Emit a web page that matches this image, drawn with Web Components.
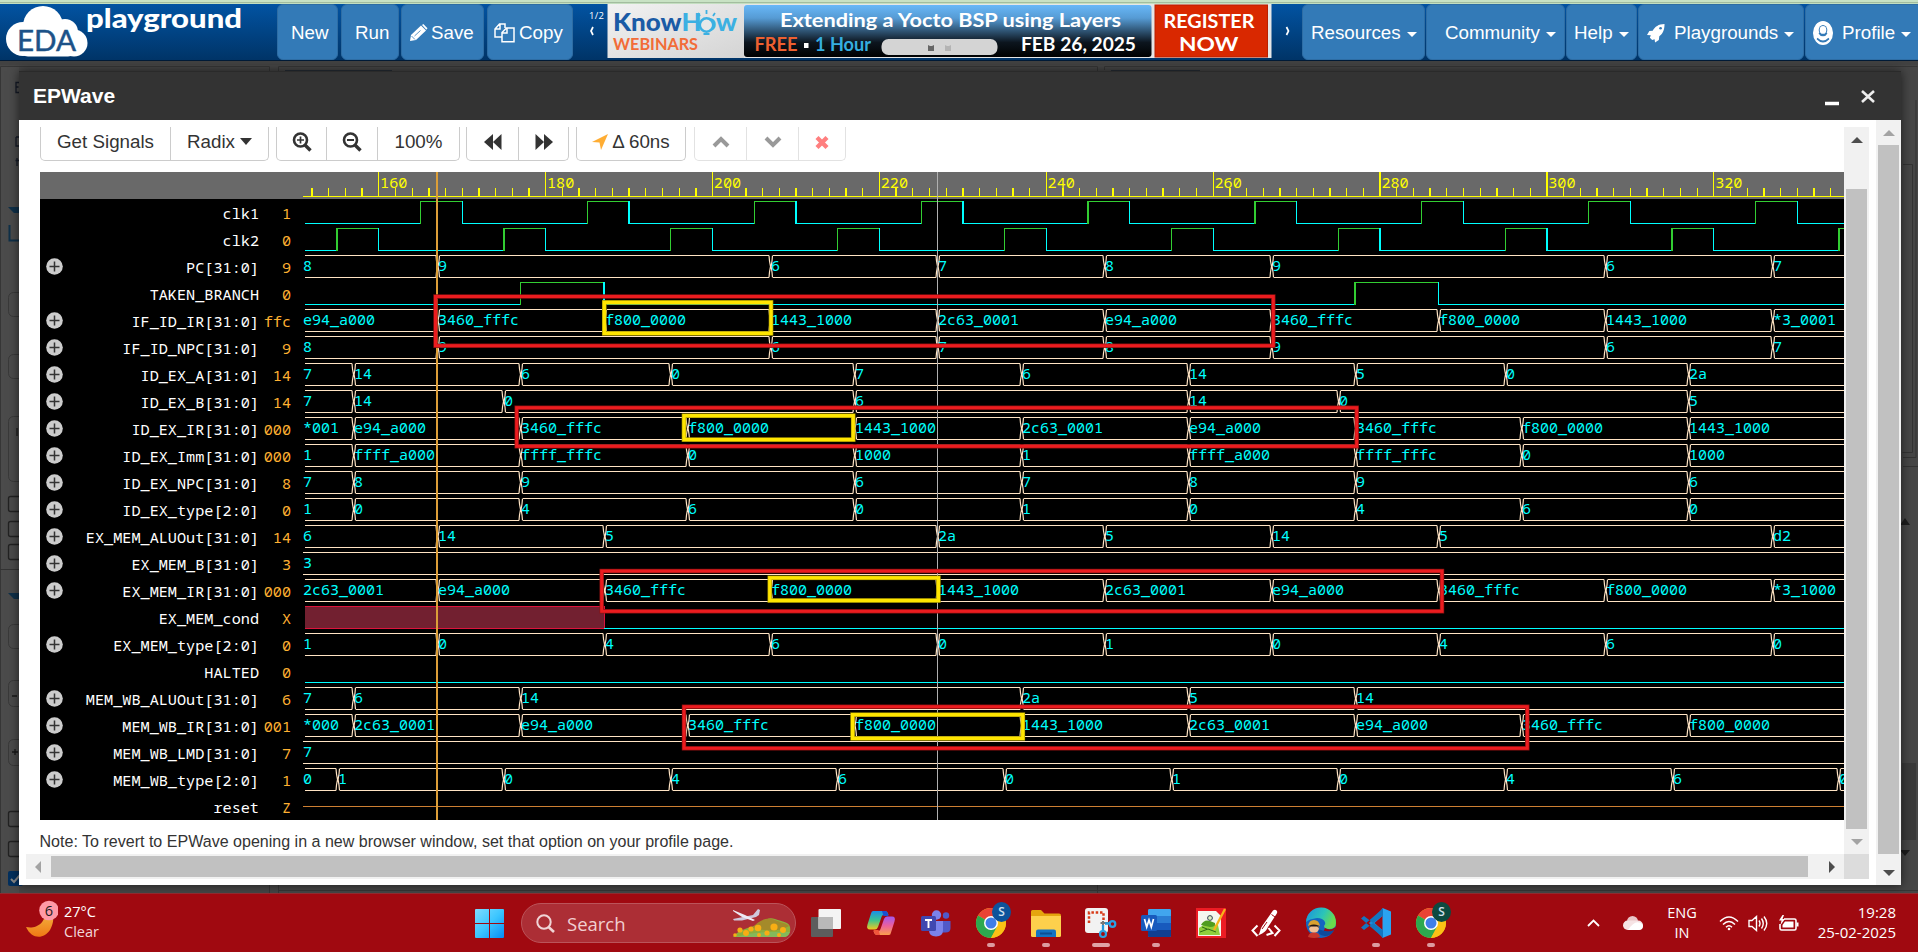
<!DOCTYPE html>
<html lang="en">
<head>
<meta charset="utf-8">
<title>EDA Playground - EPWave</title>
<style>
html,body{margin:0;padding:0;height:100%;overflow:hidden}
body{font-family:"Liberation Sans",Arial,sans-serif;font-size:18.75px;background:#484848}
</style>
</head>
<body>
<eda-app></eda-app>
<script>
function define(name, css, html, init) {
  const tpl = document.createElement('template');
  tpl.innerHTML = '<style>*{box-sizing:border-box}' + css + '</style>' + html;
  customElements.define(name, class extends HTMLElement {
    constructor() {
      super();
      this.attachShadow({ mode: 'open' }).appendChild(tpl.content.cloneNode(true));
    }
    connectedCallback() { if (init && !this.ready) { this.ready = true; init.call(this, this.shadowRoot); } }
  });
}

/* ---------- top navigation ---------- */
define('nav-button', `
:host{display:flex;align-items:center;box-sizing:border-box;height:56px;background:#337ab7;border:1px solid #2e6da4;border-radius:6px;color:#fff;white-space:nowrap;padding-top:1px}
::slotted(svg){flex:none}
i{display:none;width:0;height:0;border:5px solid transparent;border-top-color:#fff;border-bottom:0;margin:3px 0 0 6px}
:host([menu]) i{display:block}`, `<slot></slot><i></i>`);

define('site-logo', `:host{display:block;width:277px;height:56px}svg{display:block;overflow:visible}`, `
<svg width="277" height="56" viewBox="0 4 277 56">
<g fill="#fff"><circle cx="43" cy="26" r="20"/><circle cx="23" cy="39" r="17"/><circle cx="65" cy="32" r="13"/><circle cx="74" cy="43" r="13.5"/><rect x="20" y="34" width="56" height="22.5" rx="8"/></g>
<text x="17" y="50.7" font-family="Lato,sans-serif" font-size="29" fill="#1c5288" stroke="#1c5288" stroke-width=".5" textLength="59" lengthAdjust="spacingAndGlyphs">EDA</text>
<text x="86" y="28" font-family="Lato,sans-serif" font-weight="900" font-size="27" fill="#fff" textLength="156" lengthAdjust="spacingAndGlyphs">playground</text>
</svg>`);

define('webinar-banner', `:host{display:block;width:720px;height:56px}svg{display:block}text{font-family:Lato,sans-serif;font-weight:700}`, `
<svg width="720" height="56" viewBox="580 4 720 56">
<defs><linearGradient id="b" x1="0" y1="0" x2="0" y2="1"><stop offset="0" stop-color="#68b8f8"/><stop offset=".25" stop-color="#569bd4"/><stop offset=".72" stop-color="#0c151e"/><stop offset="1" stop-color="#000"/></linearGradient>
<linearGradient id="g" x1="0" y1="0" x2="1" y2="1"><stop offset="0" stop-color="#f2f2f2"/><stop offset="1" stop-color="#d4d4d4"/></linearGradient></defs>
<text x="589" y="18.5" fill="#fff" style="font:9.5px 'Open Sans',sans-serif" textLength="15">1 / 2</text>
<path d="M593 27l-2 4 2 4" fill="none" stroke="#fff" stroke-width="1.7"/>
<path d="M1286.500 27l2 4-2 4" fill="none" stroke="#fff" stroke-width="1.700"/>
<rect x="607.500" y="4" width="664" height="54" fill="#e6e6e6"/><rect x="608" y="4" width="136" height="54" fill="url(#g)"/>
<text x="613" y="31" font-size="24" style="font-weight:900" fill="#1a5ba6" textLength="124" lengthAdjust="spacingAndGlyphs">Know<tspan fill="#3cb0e2">How</tspan></text>
<circle cx="706.500" cy="25" r="6.700" fill="#e8e8e8" stroke="#3cb0e2" stroke-width="2.500"/>
<path d="M703.500 34h6M706.500 10v4M698 13l2 3M715 13l-2 3" stroke="#3cb0e2" stroke-width="1.800"/>
<text x="613" y="50" font-size="17.500" fill="#f26c38" textLength="85" lengthAdjust="spacingAndGlyphs">WEBINARS</text>
<rect x="744" y="5" width="407.500" height="52" rx="3" fill="url(#b)"/>
<text x="780" y="26.700" font-size="19.500" fill="#fff" textLength="341" lengthAdjust="spacingAndGlyphs">Extending a Yocto BSP using Layers</text>
<text x="754.500" y="51" font-size="18.500" fill="#ee6030" textLength="43" lengthAdjust="spacingAndGlyphs">FREE</text>
<rect x="804" y="43" width="4.500" height="5" fill="#fff"/>
<text x="815" y="51" font-size="18.500" fill="#35aee0" textLength="56" lengthAdjust="spacingAndGlyphs">1 Hour</text>
<rect x="881.500" y="39" width="116" height="16" rx="7" fill="#d4d4d4"/>
<path d="M928 45l2 1h2l2-1v6h-6z" fill="#666"/><path d="M945 45l2 1h2l2-1v6h-6z" fill="#b4b4b4"/>
<text x="1021" y="51" font-size="18.500" fill="#fff" textLength="115" lengthAdjust="spacingAndGlyphs">FEB 26, 2025</text>
<rect x="1155" y="5" width="112.500" height="52" fill="#d92800" stroke="#b81f00"/>
<text x="1163.500" y="28" font-size="18.500" fill="#fff" textLength="91" lengthAdjust="spacingAndGlyphs">REGISTER</text>
<text x="1179" y="51" font-size="19.500" fill="#fff" textLength="59.500" lengthAdjust="spacingAndGlyphs">NOW</text>
</svg>`);

define('nav-bar', `
:host{display:block;flex:none}
.strip{height:4px;background:linear-gradient(#c8e2c4 0 2px,#a3bd9f 2px 3px,#c3dfc0 3px)}
.bar{height:57px;display:flex;background:linear-gradient(#0253a2,#003467);border-bottom:1px solid #001a36}
site-logo,webinar-banner,nav-button{flex:none}`, `
<div class="strip"></div>
<div class="bar">
<site-logo></site-logo>
<nav-button style="width:61px;padding-left:13px">New</nav-button>
<nav-button style="width:58px;margin-left:3px;padding-left:13px">Run</nav-button>
<nav-button style="width:83px;margin-left:2px;padding-left:7px"><svg width="19" height="18" viewBox="0 0 19 18" style="margin-right:3px"><path d="M1 17l1-6L12 1.500l5 5L7 16z" fill="#fff"/><path d="M13 1l1.300-1 4.200 4.200-1.200 1.600z" fill="#fff"/><path d="M2.500 12l3.500 3.500M5.500 12l6-5.500" stroke="#337ab7" stroke-width=".8"/></svg>Save</nav-button>
<nav-button style="width:86px;margin-left:3px;padding-left:6px"><svg width="21" height="20" viewBox="0 0 21 20" style="margin-right:4px" fill="none" stroke="#fff" stroke-width="1.500"><path d="M8 14H1V6l4.500-5H11v4M1 6h5V1M8 18.800V9.500L12.500 5H20v13.800zM8 10h5V5"/></svg>Copy</nav-button>
<webinar-banner style="margin-left:7px"></webinar-banner>
<nav-button menu style="width:123px;margin-left:2px;padding-left:8px">Resources</nav-button>
<nav-button menu style="width:139px;margin-left:1px;padding-left:18px">Community</nav-button>
<nav-button menu style="width:71px;margin-left:1px;padding-left:7px">Help</nav-button>
<nav-button menu style="width:166px;margin-left:1px;padding-left:8px"><svg width="18" height="20" viewBox="0 0 19 20" style="margin-right:9px"><path d="M18.500.500C12 .500 8.500 3.500 6 7.500L2.500 8 0 12l4 .300L3 15l2.500 2.500 2.500-1 .500 3.500 4-2.500.500-4C16.500 11 18.500 7 18.500.500z" fill="#fff"/><circle cx="14.300" cy="5" r="1.400" fill="#337ab7"/></svg>Playgrounds</nav-button>
<nav-button menu style="width:120px;margin-left:1px;padding-left:7px"><svg width="20" height="24" viewBox="0 0 20 20" preserveAspectRatio="none" style="margin-right:9px"><circle cx="10" cy="10" r="9.300" fill="#fff"/><circle cx="10" cy="7.600" r="4.300" fill="#337ab7"/><circle cx="10" cy="7.400" r="3.300" fill="#fff"/><path d="M6.200 10q1.300 2 3.800 2t3.800-2M4 14.500q6 5 12 0" fill="none" stroke="#337ab7" stroke-width="1.600"/><circle cx="10" cy="10" r="9.300" fill="none" stroke="#fff" stroke-width="1.400"/></svg>Profile</nav-button>
</div>`);

/* ---------- dimmed page behind the window ---------- */
define('page-backdrop', `:host{display:block;position:absolute;inset:0;z-index:0}svg{display:block}`,
`<svg width="1918" height="832" viewBox="0 61 1918 832"></svg>`, function (root) {
  let s = '<rect y="61" width="1918" height="832" fill="#464646"/><rect y="61" width="1918" height="4" fill="#424242"/>';
  s += '<path d="M.500 893V66.500H269.500V893M278.500 893V66.500H1097.500V893M1104.500 70V66.500H1917.500M278 890.500H1918" fill="none" stroke="#363636"/>';
  s += '<rect x="1" y="67" width="18" height="826" fill="#4b4b4b"/><path d="M0 569.500h19M1903 164.500h9.500v288h-10M1903 457.500h13V100M1903 466.500h15" fill="none" stroke="#333"/>';
  s += '<path d="M285 71.500h107M1111 71.500h89" stroke="#081826" stroke-width="2"/><rect x="1902" y="763" width="14" height="77" fill="#3a3a3a"/>';
  s += '<path d="M1900 525l5-7 5 7zM1900 850l5 6 5-6z" fill="#1c1c1c"/>';
  s += '<path d="M8 207h12v6h-6zM8 593h12v6h-6z" fill="#0f3049"/><path d="M9.500 225v15.500h12" fill="none" stroke="#0f3049" stroke-width="2"/>';
  for (const [y, h] of [[292, 24], [354, 24], [416, 65], [624, 24], [680, 26], [739, 26]]) s += `<rect x="8.500" y="${y + .5}" width="30" height="${h}" rx="5" fill="#4b4b4b" stroke="#393939"/>`;
  for (const y of [496, 521, 544, 811, 841]) s += `<rect x="8.500" y="${y + .5}" width="15" height="15" rx="2" fill="none" stroke="#222" stroke-width="1.300"/>`;
  s += '<rect x="8" y="871" width="15" height="15" rx="2" fill="#03305e"/><path d="M11 879l3 3 6-7" fill="none" stroke="#888" stroke-width="2"/>';
  s += '<path d="M19 82.500h-3v10h3M15.500 87h3M16 137v9h3M16 137h3M17 158v8M15.500 160.500h3.500" fill="none" stroke="#141a26" stroke-width="1.300"/><path d="M12 696h5M12 752h6M15 749v6M17 428v8" stroke="#1a1a1a" stroke-width="1.300"/>';
  root.querySelector('svg').innerHTML = s;
});

/* ---------- toolbar ---------- */
define('tool-group', `
:host{display:flex;flex:none;box-sizing:border-box;height:34px;border:1px solid #ccc;border-top:0;border-bottom-width:1.500px;border-radius:0 0 5px 5px;color:#333}
:host([off]){border-color:#e2e2e2}`, `<slot></slot>`);
define('tool-button', `
:host{display:flex;flex:none;box-sizing:border-box;align-items:center;justify-content:center;white-space:pre;border-left:1px solid #ccc;height:33px;padding-bottom:3px}
:host(:first-child){border-left:0}
:host([off]){border-color:#e2e2e2}
::slotted(svg){flex:none}`, `<slot></slot>`);

define('wave-toolbar', `:host{display:flex;height:34px;padding-left:14px}`, `
<tool-group><tool-button style="width:129px">Get Signals</tool-button><tool-button style="width:98px">Radix<svg width="12" height="7" style="margin:0 0 1px 5px"><path d="M0 0h12l-6 7z" fill="#333"/></svg></tool-button></tool-group>
<tool-group style="margin-left:7px"><tool-button style="width:49px"><svg width="20" height="20" viewBox="0 0 20 20" fill="none" stroke="#333"><circle cx="8.500" cy="8" r="6.500" stroke-width="2.600"/><path d="M13 13l5.500 5.500" stroke-width="3.400"/><path d="M5 8h7M8.500 4.500v7" stroke-width="1.700"/></svg></tool-button><tool-button style="width:51px"><svg width="20" height="20" viewBox="0 0 20 20" fill="none" stroke="#333"><circle cx="8.500" cy="8" r="6.500" stroke-width="2.600"/><path d="M13 13l5.500 5.500" stroke-width="3.400"/><path d="M5 8h7" stroke-width="2"/></svg></tool-button><tool-button style="width:82px">100%</tool-button></tool-group>
<tool-group style="margin-left:6px"><tool-button style="width:51px"><svg width="18" height="16" viewBox="0 0 18 16"><path d="M9 0v16L0 8zM17.500 0v16L9 8z" fill="#333"/></svg></tool-button><tool-button style="width:50px"><svg width="18" height="16" viewBox="0 0 18 16"><path d="M.500 0v16L9 8zM9 0v16L18 8z" fill="#333"/></svg></tool-button></tool-group>
<tool-group style="margin-left:7px"><tool-button style="width:108px"><svg width="16" height="16" viewBox="0 0 16 16" style="margin-right:4px"><path d="M16 0L9 16 7.500 8.500 0 8z" fill="#ffad33"/></svg>Δ 60ns</tool-button></tool-group>
<tool-group off style="margin-left:8px"><tool-button off style="width:51px"><svg width="18" height="12" viewBox="0 0 18 12"><path d="M2 10l7-7 7 7" fill="none" stroke="#999" stroke-width="4"/></svg></tool-button><tool-button off style="width:52px"><svg width="18" height="12" viewBox="0 0 18 12"><path d="M2 2l7 7 7-7" fill="none" stroke="#999" stroke-width="4"/></svg></tool-button><tool-button off style="width:47px"><svg width="14" height="13" viewBox="0 0 14 13"><path d="M2 1.500l10 10M12 1.500l-10 10" stroke="#ff7f7f" stroke-width="4.300"/></svg></tool-button></tool-group>`);

/* ---------- waveforms ---------- */
const W = 1541;
const X = t => 75.8 + 8.344 * (t - 160);
const MONO = '"Noto Sans Mono","Droid Sans Mono","DejaVu Sans Mono",monospace';

define('time-ruler', `:host{display:flex;justify-content:flex-end;height:27px;background:#696969}svg{display:block}text{font:15.2px ${MONO};fill:#ff0}`,
`<svg width="${W}" height="27"></svg>`, function (root) {
  let s = `<path d="M0 24.500H${W}" stroke="#ff0" shape-rendering="crispEdges"/>`;
  for (let t = 152; t <= 336; t += 2) {
    const x = X(t), major = t % 20 === 0;
    if (x > W) break;
    s += `<path d="M${x} ${major ? 0 : 16}V24" stroke="#ff0" stroke-width="1.300" shape-rendering="crispEdges"/>`;
    if (major) s += `<text x="${x + 1.3}" y="16">${t}</text>`;
  }
  root.querySelector('svg').innerHTML = s;
});

define('wave-row', `
:host{display:flex;height:27px;color:#fff;font:15.2px ${MONO}}
.i{width:29px;flex:none;display:flex;align-items:center;justify-content:center}
.n{width:190px;flex:none;text-align:right;line-height:28px;white-space:pre}
.v{width:32px;flex:none;text-align:right;line-height:28px;color:#ffb132}
svg.w{display:block;flex:none;margin-left:12px}
svg.w text{fill:#0ff;font:15px ${MONO}}`,
`<span class="i"></span><span class="n"></span><span class="v"></span><svg class="w" width="${W}" height="27"></svg>`, function (root) {
  const [name, value, kind, data] = this.signal;
  root.querySelector('.n').textContent = name;
  root.querySelector('.v').textContent = value;
  if (name.includes('[')) root.querySelector('.i').innerHTML = '<svg width="17" height="17" viewBox="0 0 17 17"><circle cx="8.500" cy="8.500" r="8.300" fill="#ccc"/><path d="M3.500 8.500h10M8.500 3.500v10" stroke="#333" stroke-width="1.500"/></svg>';
  const line = (d, c, w) => `<path d="${d}" fill="none" stroke="${c}" stroke-width="${w || 1}" shape-rendering="crispEdges"/>`;
  let s = '';
  if (kind === 'bit') {
    let x = 2, level = 0;
    for (const t of data.concat(999)) {
      const nx = Math.min(X(t), W + 5), y = level ? 2.500 : 24.500;
      s += line(`M${x} ${y}H${nx + .5}`, level ? '#32cd32' : '#0ff');
      if (t < 999) s += line(`M${nx} 2V25`, level ? '#0ff' : '#32cd32', 1.300);
      level = 1 - level; x = nx;
    }
  } else if (kind === 'x') {
    const x = X(data);
    s += `<rect x="2" y="2" width="${x - 2}" height="23" fill="#722030"/>` + line(`M2 2.500H${x}V24.500H2`, '#dc143c') + line(`M${x} 24.500H${W}`, '#0ff');
  } else if (kind === 'z') {
    s += line(`M0 13.500H${W}`, '#cd7f32');
  } else {
    const parts = data.split(' ');
    let x = 0, label = parts[0];
    for (let k = 1; k <= parts.length; k++) {
      const last = k === parts.length;
      const [t, next] = last ? [999, ''] : parts[k].split('|');
      const nx = last ? W + 9 : Math.round(X(+t) - .5) + .5;
      const a = x ? x + 2 : (last ? 0 : 2), b = nx - 1.5;
      s += line(`M${a} 2.500H${b}M${a} 24.500H${b}`, '#ffe4c4');
      if (!last) s += `<path d="M${nx - 1.5} 2.500L${nx - 1} 8L${nx} 13.500L${nx - 1} 19L${nx - 1.5} 24.500M${nx + 2} 2.500L${nx + 1.5} 8L${nx + .6} 13.500L${nx + 1.5} 19L${nx + 2} 24.500" fill="none" stroke="#ffe4c4" stroke-width="1.200"/>`;
      s += `<text x="${x ? x + .5 : 0}" y="18.300">${label}</text>`;
      x = nx; label = next;
    }
  }
  root.querySelector('svg.w').innerHTML = s;
});

const clk = a => { const r = []; for (let t = a; t < 340; t += 20) r.push(t, t + 5); return r; };
const SIGNALS = [
['clk1', '1', 'bit', clk(165)],
['clk2', '0', 'bit', clk(155)],
['PC[31:0]', '9', 'bus', '8 167|9 207|6 227|7 247|8 267|9 307|6 327|7'],
['TAKEN_BRANCH', '0', 'bit', [177, 187, 277, 287]],
['IF_ID_IR[31:0]', 'ffc', 'bus', 'e94_a000 167|3460_fffc 187|f800_0000 207|1443_1000 227|2c63_0001 247|e94_a000 267|3460_fffc 287|f800_0000 307|1443_1000 327|*3_0001'],
['IF_ID_NPC[31:0]', '9', 'bus', '8 167|9 207|6 227|7 247|8 267|9 307|6 327|7'],
['ID_EX_A[31:0]', '14', 'bus', '7 157|14 177|6 195|0 217|7 237|6 257|14 277|5 295|0 317|2a'],
['ID_EX_B[31:0]', '14', 'bus', '7 157|14 175|0 217|6 257|14 275|0 317|5'],
['ID_EX_IR[31:0]', '000', 'bus', '*001 157|e94_a000 177|3460_fffc 197|f800_0000 217|1443_1000 237|2c63_0001 257|e94_a000 277|3460_fffc 297|f800_0000 317|1443_1000'],
['ID_EX_Imm[31:0]', '000', 'bus', '1 157|ffff_a000 177|ffff_fffc 197|0 217|1000 237|1 257|ffff_a000 277|ffff_fffc 297|0 317|1000'],
['ID_EX_NPC[31:0]', '8', 'bus', '7 157|8 177|9 217|6 237|7 257|8 277|9 317|6'],
['ID_EX_type[2:0]', '0', 'bus', '1 157|0 177|4 197|6 217|0 237|1 257|0 277|4 297|6 317|0'],
['EX_MEM_ALUOut[31:0]', '14', 'bus', '6 167|14 187|5 227|2a 247|5 267|14 287|5 327|d2'],
['EX_MEM_B[31:0]', '3', 'bus', '3'],
['EX_MEM_IR[31:0]', '000', 'bus', '2c63_0001 167|e94_a000 187|3460_fffc 207|f800_0000 227|1443_1000 247|2c63_0001 267|e94_a000 287|3460_fffc 307|f800_0000 327|*3_1000'],
['EX_MEM_cond', 'X', 'x', 187],
['EX_MEM_type[2:0]', '0', 'bus', '1 167|0 187|4 207|6 227|0 247|1 267|0 287|4 307|6 327|0'],
['HALTED', '0', 'bit', []],
['MEM_WB_ALUOut[31:0]', '6', 'bus', '7 157|6 177|14 237|2a 257|5 277|14'],
['MEM_WB_IR[31:0]', '001', 'bus', '*000 157|2c63_0001 177|e94_a000 197|3460_fffc 217|f800_0000 237|1443_1000 257|2c63_0001 277|e94_a000 297|3460_fffc 317|f800_0000'],
['MEM_WB_LMD[31:0]', '7', 'bus', '7'],
['MEM_WB_type[2:0]', '1', 'bus', '0 155|1 175|0 195|4 215|6 235|0 255|1 275|0 295|4 315|6 335|0'],
['reset', 'Z', 'z', 0]
];

define('wave-view', `
:host{display:block;position:relative;width:1804px;height:648px;margin-left:14px;background:#000;overflow:hidden}
.marks{position:absolute;left:0;top:0;pointer-events:none}`,
`<time-ruler></time-ruler><div class="rows"></div><svg class="marks" width="1804" height="648" viewBox="40 172 1804 648"></svg>`, function (root) {
  const rows = root.querySelector('.rows');
  for (const sig of SIGNALS) { const r = document.createElement('wave-row'); r.signal = sig; rows.appendChild(r); }
  let s = '<rect x="436" y="172" width="2" height="648" fill="#dc9e38"/><rect x="937" y="172" width="1" height="648" fill="#b0b0b0"/>';
  const box = (c, l, t, r, b, w) => `<rect x="${l}" y="${t}" width="${r - l}" height="${b - t}" fill="none" stroke="${c}" stroke-width="${w}"/>`;
  for (const r of [[435.5, 296.5, 1273.3, 345.7], [516.7, 407.7, 1356.7, 446.3], [601.7, 571, 1442, 611.3], [684, 706.7, 1527.3, 748.3]]) s += box('#8c1010', ...r, 4.4) + box('#eb1c1f', ...r, 3);
  for (const r of [[604.3, 302.4, 771, 333.4], [684, 415.7, 853.2, 439.6], [769.8, 577.8, 938.4, 600.5], [852.6, 714.7, 1022.8, 738.4]]) s += box('#a89600', ...r, 4.6) + box('#ffe500', ...r, 3.3);
  root.querySelector('.marks').innerHTML = s;
});

/* ---------- scroll bars ---------- */
define('scroll-bar', `
:host{display:flex;flex-direction:column;box-sizing:border-box;width:25px;background:#f1f1f1}
:host([horizontal]){flex-direction:row;width:auto;height:25px}
.a{flex:none;display:flex;align-items:center;justify-content:center;width:25px;height:25px}
.t{background:#c1c1c1;flex:none;margin:0 2px}
:host([horizontal]) .t{margin:2px 0}
b{flex:1}`, `<span class="a"></span><span class="t"></span><b></b><span class="a"></span>`, function (root) {
  const h = this.hasAttribute('horizontal'), [s, e] = root.querySelectorAll('.a'), t = root.querySelector('.t');
  const off = this.getAttribute('end');
  const dark = '#4d4d4d', light = '#a3a3a3';
  const svg = (d, c) => `<svg width="12" height="12" viewBox="0 0 12 12"><path d="${d}" fill="${c}"/></svg>`;
  s.innerHTML = svg(h ? 'M8 0v12L2 6z' : 'M0 9h12L6 3z', off === 'start' ? light : dark);
  e.innerHTML = svg(h ? 'M3 0v12l6-6z' : 'M0 3h12L6 9z', off === 'end' ? light : dark);
  t.style[h ? 'width' : 'height'] = this.getAttribute('thumb') + 'px';
  t.style[h ? 'marginLeft' : 'marginTop'] = (this.getAttribute('offset') || 0) + 'px';
});

/* ---------- EPWave window ---------- */
define('epwave-window', `
:host{display:flex;flex-direction:column;position:relative;z-index:1;width:1882px;height:814px;margin:10px 0 0 19px;background:#fff;box-shadow:0 0 10px rgba(0,0,0,.6)}
header{flex:none;height:49px;background:#333;color:#fff;display:flex;align-items:center;padding:0 26px 0 14px;font-weight:700;font-size:21px;border-top:1px solid #2a2a2a}
header span{flex:1;padding-bottom:1px}
main{flex:1;display:flex;min-height:0}
.pane{flex:none;width:1843px;margin:7px 7px 6px 7px;display:grid;grid-template-columns:1818px 25px;grid-template-rows:727px 25px}
.view{overflow:hidden}
wave-view{margin-top:11px}
.note{margin:12px 0 0 13.500px;font-size:16.060px;line-height:18px;color:#333;white-space:nowrap}
.corner{background:#dcdcdc}`, `
<header><span>EPWave</span><svg width="60" height="20" viewBox="0 0 60 20"><path d="M10 17.500h14" stroke="#fff" stroke-width="3.500"/><path d="M47 5l12 11M59 5l-12 11" stroke="#eee" stroke-width="2.600"/></svg></header>
<main>
<div class="pane">
<div class="view"><wave-toolbar></wave-toolbar><wave-view></wave-view><div class="note">Note: To revert to EPWave opening in a new browser window, set that option on your profile page.</div></div>
<scroll-bar end="end" offset="37" thumb="640"></scroll-bar>
<scroll-bar horizontal end="start" thumb="1757"></scroll-bar>
<div class="corner"></div>
</div>
<scroll-bar end="start" thumb="709"></scroll-bar>
</main>`);

/* ---------- task bar ---------- */
define('task-icon', `
:host{display:flex;flex:none;position:relative;width:55px;height:58px;justify-content:center;align-items:center}
::slotted(svg){overflow:visible}
i{display:none;position:absolute;bottom:5px;left:50%;width:8px;height:4px;margin-left:-4px;border-radius:2px;background:#dc9ba0}
:host([open]) i{display:block}
:host([active]) i{width:18px;margin-left:-9px;background:#e0a2a6}
em{display:none;position:absolute;left:29px;top:8px;width:19px;height:20px;border-radius:50%;font:600 12px/20px "Open Sans",sans-serif;text-align:center;color:#cfe0ee}
:host([badge]) em{display:block}`, `<slot></slot><i></i><em></em>`, function (root) {
  if (this.hasAttribute('badge')) { const e = root.querySelector('em'); e.textContent = 'S'; e.style.background = this.getAttribute('badge'); }
});

const chrome = `<svg width="30" height="30" viewBox="0 0 30 30"><circle cx="15" cy="15" r="15" fill="#fbc116"/><path d="M15 15L2 7.500A15 15 0 0 1 28 7.500z" fill="#ea4335"/><path d="M2 7.500A15 15 0 0 0 15 30l6.500-11L15 15z" fill="#2da94f"/><path d="M15 8.500H28.500A15 15 0 0 1 15 30l6-11.500z" fill="#fbc116"/><circle cx="15" cy="15" r="7" fill="#fff"/><circle cx="15" cy="15" r="5.500" fill="#3f7ee8"/></svg>`;

define('task-bar', `
:host{display:flex;flex:none;position:relative;height:59px;background:#a00910;border-top:1px solid #8f2b30;font-family:"Open Sans",sans-serif;color:#fff}
.weather{width:475px;flex:none;display:flex;padding:5px 0 0 22px;font-size:14.500px;line-height:20px}
.weather svg{flex:none;margin:-1px 6px 0 0}
.weather b{font-weight:400;color:#f2d8da}
.weather div,.eng,.clock{white-space:pre}
.weather div{padding-top:3px}
.start{width:46px;flex:none;padding-top:15px}
.search{width:275px;height:40px;margin-top:9px;flex:none;border-radius:20px;background:#ac2e35;border:1px solid #bb545a;display:flex;align-items:center;padding-left:14px;font-size:18.500px;color:#f1cfd1}
.search svg{flex:none}
.search span{flex:1;padding-left:12px}
.apps{display:flex;margin-left:2px;flex:none}
.tray{flex:1;display:flex;align-items:center;font-size:15px;line-height:20px;justify-content:flex-end;padding-right:22px}
.eng{text-align:center;font-size:14.500px}
.clock{text-align:right;font-size:15px;padding-bottom:2px}`, `
<div class="weather"><svg width="36" height="44" viewBox="22 898 36 44"><defs><linearGradient id="m" x1="0" y1="0" x2="0" y2="1"><stop offset="0" stop-color="#f3c04a"/><stop offset="1" stop-color="#f07814"/></linearGradient></defs><path d="M46 907c10 5 8 15 4 22-6 9-18 10-24-3 9 2 20-2 20-19z" fill="url(#m)" transform="translate(0 1)"/><circle cx="49" cy="910.500" r="9.800" fill="#ff9aa6"/><text x="49" y="915.700" font-size="14.500" text-anchor="middle" fill="#1c1c1c">6</text></svg><div>27°C
<b>Clear</b></div></div>
<div class="start"><svg width="29" height="29" viewBox="0 0 29 29"><defs><linearGradient id="w" x1="0" y1="0" x2="1" y2="1"><stop offset="0" stop-color="#7fdcff"/><stop offset=".5" stop-color="#3cc6ff"/><stop offset="1" stop-color="#068cf5"/></linearGradient></defs><path d="M0 1q0-1 1-1h13v14H0zM15 0h13q1 0 1 1v13H15zM0 15h14v14H1q-1 0-1-1zM15 15h14v13q0 1-1 1H15z" fill="url(#w)"/></svg></div>
<div class="search"><svg width="19" height="19" viewBox="0 0 19 19" fill="none" stroke="#f0d4d6"><circle cx="8" cy="8" r="6.700" stroke-width="2"/><path d="M12.500 13l5.500 5" stroke-width="2.600"/></svg><span>Search</span>
<svg width="60" height="32" viewBox="0 0 60 32" style="margin-right:3px"><path d="M1 30c6-8 16-9 24-12s10-9 18-6 14 3 15 8-1 9-6 10z" fill="#8fae3c"/><path d="M20 21c8-9 16-11 23-8s11 3 14 6c-10 6-22 5-37 2z" fill="#a48a2a"/><path d="M8 29c14-5 34-4 50-4-1 3-3 5-6 5H2z" fill="#84b95b"/><g fill="#f8ae14"><circle cx="8" cy="23" r="2.600"/><circle cx="14" cy="26" r="3"/><circle cx="19" cy="22" r="2.600"/><circle cx="26" cy="21" r="3.300"/><circle cx="35" cy="26" r="2.600"/><circle cx="42" cy="20" r="3.600"/><circle cx="51" cy="23" r="3"/><circle cx="27" cy="28" r="2"/><circle cx="3" cy="28" r="1.800"/><circle cx="47" cy="28" r="2"/></g><path d="M1 12l20-4 5-6 2 1-1 5-3 2-14 3.500-8 0z" fill="#cfc8dc"/><path d="M1 3l12 5 10 5-2 1-11-4L1 4z" fill="#eeeaf4"/></svg></div>
<div class="apps">
<task-icon><svg width="30" height="28" viewBox="0 0 30 28"><rect x="0" y="8" width="22" height="20" rx="1" fill="#5d5d5d"/><rect x="7.500" y="0" width="22.500" height="20" rx="1" fill="#f4f4f4"/><rect x="7.500" y="8" width="14.500" height="12" fill="#b9b9b9"/></svg></task-icon>
<task-icon><svg width="28" height="26" viewBox="0 0 28 26"><defs><linearGradient id="c1" x1="0" y1="0" x2="0" y2="1"><stop offset="0" stop-color="#1a8fe8"/><stop offset=".5" stop-color="#3dc48f"/><stop offset="1" stop-color="#f0c820"/></linearGradient><linearGradient id="c2" x1="0" y1="0" x2="0" y2="1"><stop offset="0" stop-color="#a258ee"/><stop offset=".5" stop-color="#ec5f9c"/><stop offset="1" stop-color="#f9a04c"/></linearGradient></defs><path d="M6 1h12q2.500 0 3.500 4h-5q-1.500 0-2 2l-3.500 10q-1 2.500-3 2.500H3q-4 0-2.500-5L4 3.500Q4.500 1 6 1z" fill="url(#c1)"/><path d="M15 1h3q2.500 0 3.500 5h-5z" fill="#1c50d0"/><path d="M22 25H10q-2.500 0-3.500-4h5q1.500 0 2-2L17 9q1-2.500 3-2.500h5q4 0 2.500 5L24 22.500q-.500 2.500-2 2.500z" fill="url(#c2)"/><path d="M13 25h-3q-2.500 0-3.500-5h5z" fill="#f0553c"/></svg></task-icon>
<task-icon><svg width="30" height="27" viewBox="0 0 30 27"><circle cx="15.500" cy="5" r="4.700" fill="#7b83eb"/><circle cx="25" cy="5.500" r="3.200" fill="#5059c9"/><path d="M20 11h9.500v7q0 4.500-5 4.500h-4z" fill="#5059c9"/><path d="M8 11h14v9q0 6.500-7 6.500T8 20z" fill="#7b83eb"/><rect x="0" y="6" width="15" height="15" rx="1.500" fill="#4048b0"/><path d="M4 10h7M7.500 10v8" stroke="#fff" stroke-width="1.900"/></svg></task-icon>
<task-icon open badge="#0d539b">${chrome}</task-icon>
<task-icon open><svg width="30" height="27" viewBox="0 0 30 27"><path d="M0 1.500Q0 0 1.500 0H10l3.500 3.500H28q2 0 2 2V26H0z" fill="#e5a50e"/><path d="M0 6h30v19.500q0 1.500-1.500 1.500h-27Q0 27 0 25.500z" fill="#fdd04c"/><path d="M5 27v-5.500Q5 19.500 7 19.500h16q2 0 2 2V27z" fill="#1473c4"/><path d="M9 23.500h12" stroke="#0d4f94" stroke-width="2"/></svg></task-icon>
<task-icon open active><svg width="31" height="30" viewBox="0 0 31 30"><rect width="23" height="25" rx="3" fill="#f2f2f2"/><path d="M4 15V4.500h14.500V13" fill="none" stroke="#d83b18" stroke-width="2.500" stroke-dasharray="2.500 1.800"/><path d="M18 13v10M15.500 15H27" stroke="#777" stroke-width="2"/><path d="M18 17v8M20 15.500h7" stroke="#2196dc" stroke-width="2.300"/><circle cx="18" cy="26" r="3" fill="#a00910" stroke="#2aa0e4" stroke-width="2.200"/><circle cx="27.500" cy="16" r="2.800" fill="#a00910" stroke="#2aa0e4" stroke-width="2.200"/></svg></task-icon>
<task-icon open><svg width="30" height="28" viewBox="0 0 30 28"><rect x="7" width="23" height="28" rx="1.500" fill="#2b7cd3"/><path d="M7 1.500Q7 0 8.500 0h20Q30 0 30 1.500V7H7z" fill="#41a5ee"/><path d="M7 14h23v7H7z" fill="#185abd"/><path d="M7 21h23v5.500q0 1.500-1.500 1.500h-20Q7 28 7 26.500z" fill="#103f91"/><rect y="6" width="16" height="16" rx="1.500" fill="#185abd"/><path d="M3.500 10l2.200 8L8 11l2.300 7 2.200-8" fill="none" stroke="#fff" stroke-width="1.700"/></svg></task-icon>
<task-icon><svg width="30" height="30" viewBox="0 0 30 30"><rect width="30" height="30" fill="#ed1c24"/><path d="M2 3h18l5 5v20H2z" fill="#f4f8ee"/><path d="M3 27V20l6-4 13 1 2 10z" fill="#8fcf3c"/><path d="M5 17q3-6 9-4l5 2q1 4-5 4z" fill="#4f9c1f"/><circle cx="14" cy="10" r="2.400" fill="#dff2c0" stroke="#345"/><path d="M4 24l8-3 8 3M6 19l5 2" stroke="#2f6a12" fill="none"/><path d="M29 1L18 22" stroke="#f6b21a" stroke-width="2.300"/></svg></task-icon>
<task-icon><svg width="30" height="29" viewBox="0 0 30 29"><path d="M22 1.500c3-2 5.500 1 3.500 3.500L17 18c-2 5-6 7-10.500 8.500 3-2 2-6 5-10z" fill="#fff"/><path d="M20.500 5.500l3.500 2.500M11 20l5-7" stroke="#a00910" stroke-width="1"/><path d="M6.500 16.500L1.500 21.500l5 5.500M23.500 16.500l5 5-5 5.500M17.500 19l4 5-6 2" fill="none" stroke="#fff" stroke-width="2"/></svg></task-icon>
<task-icon><svg width="30" height="30" viewBox="0 0 30 30"><defs><linearGradient id="e" x1="0" y1="0" x2="1" y2=".4"><stop offset="0" stop-color="#1b8fe0"/><stop offset=".6" stop-color="#2bc4b8"/><stop offset="1" stop-color="#6bdc4c"/></linearGradient></defs><circle cx="15" cy="15" r="15" fill="#1565c0"/><path d="M0 14A15 15 0 0 1 30 15q0 6-7 6-5 0-5-3 2-2 1-4-2-4-8-4Q3 11 0 14z" fill="url(#e)"/><path d="M19 20q5 3 10-.500l.500 1-4 5-8-2z" fill="#a00910"/><path d="M11 20q0 7 8 8 6 0 9-6-4 2-8 1-7-1-9-3z" fill="#0e4a9c"/><circle cx="8" cy="20" r="5" fill="#f0bf95"/><path d="M2 18q1-6 6-6t6 6l-2-1H5z" fill="#d9a130"/><path d="M3.500 17.500q4-2 9 0v3l-1-2h-7l-1 2z" fill="#201510"/><path d="M2 29q1-5 6-4.500 5-.500 6 4.500-6 2-12 0z" fill="#c8382c"/></svg></task-icon>
<task-icon open><svg width="30" height="30" viewBox="0 0 30 30"><path d="M21.500 0L30 3.500v23L21.500 30z" fill="#2aa3f0"/><path d="M22 0L8 15l14 15v-7.500L13.500 15 22 7.500z" fill="#1f8ad8"/><path d="M3 8L0 10.500 19 27l3 3V22.500zM3 22L0 19.500 19 3l3-3v7.500z" fill="#1376c0"/></svg></task-icon>
<task-icon open badge="#0d4a40">${chrome}</task-icon>
</div>
<div class="tray">
<svg width="13" height="8" viewBox="0 0 13 8" style="margin-right:23px"><path d="M1 7l5.500-5.500L12 7" fill="none" stroke="#fff" stroke-width="1.800"/></svg>
<svg width="20" height="14" viewBox="0 0 20 14" style="margin-right:24px"><circle cx="9.500" cy="5.500" r="5.500" fill="#e9c4c7"/><rect x="0" y="4.500" width="20" height="9.500" rx="4.700" fill="#f6e3e4"/><path d="M5 14q6-9 11-7.500Q20 7.500 20 10q0 4-4 4z" fill="#fff"/></svg>
<div class="eng" style="margin-right:22px">ENG
IN</div>
<svg width="20" height="16" viewBox="0 0 20 16" fill="none" stroke="#fff" stroke-width="1.500" style="margin-right:9px"><path d="M1 6.500q9-9 18 0M4 9.500q6-6 12 0M7 12.300q3-3 6 0"/><circle cx="10" cy="14" r="1.300" fill="#fff" stroke="none"/></svg>
<svg width="21" height="17" viewBox="0 0 21 17" fill="none" stroke="#fff" stroke-width="1.400" style="margin-right:9px"><path d="M1 5.500h3L8.500 1.500v14L4 11.500H1zM11 5.500q2 3 0 6M13.500 3.500q3.500 5 0 10M16 1.500q5.500 7 0 14"/></svg>
<svg width="21" height="17" viewBox="0 0 21 17" style="margin-right:19px"><path d="M6 4h10.500q1.500 0 1.500 1.500v8q0 1.500-1.500 1.500h-13Q2 15 2 13.500V9" fill="none" stroke="#fff" stroke-width="1.600"/><path d="M7 6.500h8.500v6h-11V10z" fill="#fff"/><path d="M18.500 7.500h2v4h-2z" fill="#fff"/><path d="M4.500 0L1 5.500h2.500L2.500 10 7 4H4.500L6 0z" fill="#fff"/></svg>
<div class="clock">19:28
25-02-2025</div>
</div>`);

define('eda-app', `
:host{display:flex;flex-direction:column;width:1918px;height:952px;overflow:hidden}
.stage{flex:1;position:relative;display:flow-root;overflow:hidden}`, `
<nav-bar></nav-bar><div class="stage"><page-backdrop></page-backdrop><epwave-window></epwave-window></div><task-bar></task-bar>`);
</script>
</body>
</html>
